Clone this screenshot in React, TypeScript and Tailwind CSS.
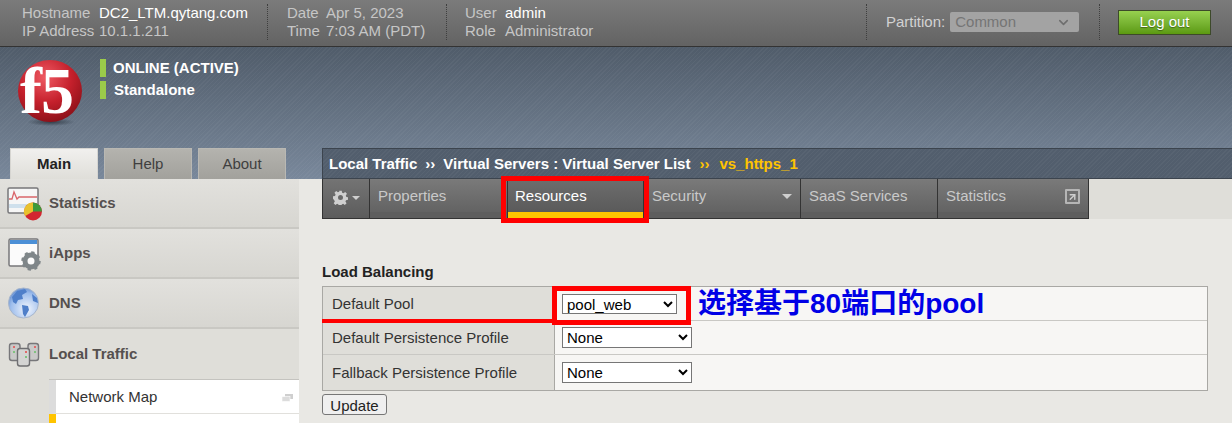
import { ArrowUpRight, ChevronDown } from "lucide-react";

const stripes =
  "bg-[repeating-linear-gradient(135deg,rgba(255,255,255,0.035)_0px,rgba(255,255,255,0.035)_1px,transparent_1px,transparent_3px),linear-gradient(180deg,#505c6a_0%,#79889b_100%)]";

function Separator() {
  return <div className="h-[36px] w-px self-center border-l border-dotted border-[#3f3f3f]" />;
}

function F5Logo() {
  return (
    <svg width="68" height="68" viewBox="0 0 68 68" className="shrink-0 overflow-visible">
      <defs>
        <radialGradient id="ball" cx="42%" cy="28%" r="75%">
          <stop offset="0%" stopColor="#ef5a63" />
          <stop offset="55%" stopColor="#c5202c" />
          <stop offset="100%" stopColor="#8a1018" />
        </radialGradient>
        <radialGradient id="shade" cx="50%" cy="50%" r="50%">
          <stop offset="0%" stopColor="#1d2630" stopOpacity="0.7" />
          <stop offset="100%" stopColor="#1d2630" stopOpacity="0" />
        </radialGradient>
      </defs>
      <ellipse cx="34" cy="63" rx="24" ry="4" fill="url(#shade)" />
      <ellipse cx="33" cy="32" rx="32" ry="31" fill="url(#ball)" />
      <text x="3" y="54" fontFamily="Liberation Serif" fontWeight="700" fontSize="66" fill="#fff" letterSpacing="-1">
        f5
      </text>
    </svg>
  );
}

function StatsIcon() {
  return (
    <svg width="44" height="34" viewBox="0 0 44 34" className="overflow-visible">
      <rect x="2" y="2" width="30" height="25" rx="1.5" fill="#f6f6f6" stroke="#77777a" strokeWidth="1.5" />
      <rect x="3" y="18" width="28" height="4" fill="#cfe0ec" />
      <path d="M3 13h3l2-7 3 7 2-2h18" fill="none" stroke="#d9656a" strokeWidth="1.3" />
      <circle cx="27" cy="25.5" r="9" fill="#d22630" />
      <path d="M27 25.5V16.5A9 9 0 0 1 36 25.5z" fill="#3c9a3a" />
      <path d="M27 25.5V16.5A9 9 0 0 0 19.2 30z" fill="#e8c22e" />
    </svg>
  );
}

function AppsIcon() {
  return (
    <svg width="44" height="34" viewBox="0 0 44 34" className="overflow-visible">
      <rect x="3" y="3" width="29" height="27" rx="1.5" fill="#fbfbfb" stroke="#77777a" strokeWidth="1.5" />
      <rect x="4" y="4" width="27" height="4" fill="#4b8fd6" />
      <circle cx="25" cy="25" r="6" fill="none" stroke="#7f8689" strokeWidth="5" />
      <circle cx="25" cy="25" r="8.5" fill="none" stroke="#7f8689" strokeWidth="2.5" strokeDasharray="3.2 3.47" />
    </svg>
  );
}

function GlobeIcon() {
  return (
    <svg width="44" height="34" viewBox="0 0 44 34">
      <defs>
        <radialGradient id="sea" cx="60%" cy="70%" r="75%">
          <stop offset="0%" stopColor="#f2f6fd" />
          <stop offset="70%" stopColor="#9dbdec" />
          <stop offset="100%" stopColor="#5e88cc" />
        </radialGradient>
      </defs>
      <circle cx="17.5" cy="17" r="15" fill="url(#sea)" stroke="#a7b6cc" />
      <path d="M6 11l5-6 8-2 2 3-5 3 1 4-5 1-2 4-3-2zM16 19l6 1 1 4-4 7-2-3zM26 8l5 4 1 5-5-2z" fill="#4f7fc9" />
    </svg>
  );
}

function ServersIcon() {
  return (
    <svg width="44" height="34" viewBox="0 0 44 34">
      <rect x="3.5" y="6.5" width="10.5" height="17" rx="2.5" fill="#c9c9c8" stroke="#77777a" strokeWidth="1.4" />
      <rect x="22" y="6.5" width="10.5" height="17" rx="2.5" fill="#c9c9c8" stroke="#77777a" strokeWidth="1.4" />
      <rect x="11.5" y="11.5" width="12" height="17.5" rx="2.5" fill="#d4d4d3" stroke="#6f6f72" strokeWidth="1.4" />
      <rect x="7" y="9" width="2" height="2" fill="#e06a6a" />
      <rect x="28" y="9" width="2" height="2" fill="#e06a6a" />
      <rect x="19" y="14" width="2" height="2" fill="#e06a6a" />
      <rect x="19" y="19" width="2" height="2" fill="#7fc27f" />
      <rect x="7" y="14" width="2" height="2" fill="#7fc27f" />
      <rect x="28" y="14" width="2" height="2" fill="#7fc27f" />
    </svg>
  );
}

function SideRow({ icon, label, last }: { icon: React.ReactNode; label: string; last?: boolean }) {
  return (
    <div
      className={
        last
          ? "flex h-[50px] items-center pl-[6px] text-[15px] font-bold text-[#55504f]"
          : "flex h-[50px] items-center border-b-2 border-[#c9c8c3] bg-gradient-to-b from-[#e2e1dd] to-[#d7d6d1] pl-[6px] text-[15px] font-bold text-[#55504f]"
      }
    >
      <span className="w-[43px] shrink-0">{icon}</span>
      {label}
    </div>
  );
}

function TopTab({ label, active }: { label: string; active?: boolean }) {
  return (
    <div
      className={
        active
          ? "flex h-[31px] w-[88px] items-center justify-center border border-b-0 border-[#d6d5d1] bg-gradient-to-b from-[#f1f0ee] to-[#dfded9] text-[15px] font-bold text-[#222]"
          : "flex h-[31px] w-[88px] items-center justify-center border border-b-0 border-[#b9b8b3] bg-gradient-to-b from-[#b4b3ae] to-[#a2a19c] text-[15px] text-[#3f3f3f]"
      }
    >
      {label}
    </div>
  );
}

function NavTab({ label, width, children }: { label: string; width: string; children?: React.ReactNode }) {
  return (
    <div className={`${width} flex h-full flex-col border-l border-[#333]`}>
      <div className="flex flex-1 items-center justify-between bg-gradient-to-b from-[#7a7a7a] to-[#636363] px-[8px] pt-[2px] text-[15px] text-[#c9c9c9]">
        {label}
        {children}
      </div>
      <div className="h-[6px] bg-[#5e5e5e]" />
    </div>
  );
}

function FormRow({ label, children, last }: { label: string; children: React.ReactNode; last?: boolean }) {
  return (
    <div className={last ? "relative flex h-[35px]" : "relative flex h-[34px] border-b border-[#c9c8c4]"}>
      <div className="flex w-[232px] shrink-0 items-center border-r border-[#a9a8a4] bg-[#dfded9] pl-[9px] pt-[2px] text-[15px] text-[#333]">
        {label}
      </div>
      <div className="flex flex-1 items-center bg-[#f7f6f4] pl-[7px]">{children}</div>
    </div>
  );
}

export default function App() {
  return (
    <div className="h-[423px] w-[1232px] overflow-hidden bg-[#e9e8e4] font-['Liberation_Sans',Arial,sans-serif] text-[15px]">
      <header className="flex h-[47px] items-center border-b border-[#333] bg-gradient-to-b from-[#7b7b7b] to-[#636363] pb-[2px] leading-[18px]">
        <div className="grid w-[267px] grid-cols-[77px_1fr] pl-[22px] text-[#c6c6c6]">
          <span>Hostname</span>
          <span className="text-white">DC2_LTM.qytang.com</span>
          <span>IP Address</span>
          <span>10.1.1.211</span>
        </div>
        <Separator />
        <div className="grid w-[178px] grid-cols-[39px_1fr] pl-[19px] text-[#c6c6c6]">
          <span>Date</span>
          <span>Apr 5, 2023</span>
          <span>Time</span>
          <span>7:03 AM (PDT)</span>
        </div>
        <Separator />
        <div className="grid w-[419px] grid-cols-[40px_1fr] pl-[18px] text-[#c6c6c6]">
          <span>User</span>
          <span className="text-white">admin</span>
          <span>Role</span>
          <span>Administrator</span>
        </div>
        <Separator />
        <div className="flex w-[232px] items-center gap-[5px] pl-[19px]">
          <span className="text-[#d2d2d2]">Partition:</span>
          <div className="flex h-[20px] w-[129px] items-center justify-between rounded-[2px] bg-[#a3a3a3] pl-[5px] pr-[8px] text-[#757575]">
            Common
            <ChevronDown size={15} strokeWidth={2.5} className="text-[#6e6e6e]" />
          </div>
        </div>
        <Separator />
        <button className="ml-[18px] h-[25px] w-[93px] border border-[#3d4a2a] bg-gradient-to-b from-[#97d14f] to-[#5c9a10] text-[15px] text-white [text-shadow:0_1px_1px_rgba(0,0,0,0.4)]">
          Log out
        </button>
      </header>

      <div className={`flex h-[132px] flex-col justify-between ${stripes}`}>
        <div className="flex pl-[17px] pt-[12px]">
          <F5Logo />
          <div className="ml-[15px] flex flex-col gap-[4px] text-[15px] font-bold text-white">
            <div className="flex h-[18px] items-center gap-[7px]">
              <span className="h-full w-[6px] bg-[#9bcb4a]" />
              ONLINE (ACTIVE)
            </div>
            <div className="flex h-[18px] items-center gap-[8px]">
              <span className="h-full w-[6px] bg-[#9bcb4a]" />
              Standalone
            </div>
          </div>
        </div>
        <div className="flex items-end">
          <div className="flex w-[322px] gap-[6px] pl-[10px]">
            <TopTab label="Main" active />
            <TopTab label="Help" />
            <TopTab label="About" />
          </div>
          <div className="flex h-[31px] flex-1 items-center gap-[8px] border border-r-0 border-[#3c444e] bg-[#525e6d] bg-[repeating-linear-gradient(135deg,rgba(255,255,255,0.035)_0px,rgba(255,255,255,0.035)_1px,transparent_1px,transparent_3px)] pl-[6px] pt-[2px] font-bold text-white">
            <span>Local Traffic</span>
            <span>››</span>
            <span>Virtual Servers : Virtual Server List</span>
            <span className="ml-px text-[#ffc400]">››</span>
            <span className="ml-[2px] text-[#ffc400]">vs_https_1</span>
          </div>
        </div>
      </div>

      <div className="flex">
        <aside className="h-[244px] w-[299px] shrink-0 bg-[#dfded9]">
          <SideRow icon={<StatsIcon />} label="Statistics" />
          <SideRow icon={<AppsIcon />} label="iApps" />
          <SideRow icon={<GlobeIcon />} label="DNS" />
          <SideRow icon={<ServersIcon />} label="Local Traffic" last />
          <div className="ml-[49px] border-t border-[#c4c3bf] bg-white">
            <div className="flex h-[34px] items-center justify-between border-b border-l-[7px] border-[#e1e0dc] border-l-[#dcdcdc] pl-[13px] pr-[6px] pt-[2px] text-[#333]">
              Network Map
              <svg width="11" height="8" viewBox="0 0 11 8">
                <rect x="3" y="0" width="8" height="5" fill="#cfcfcf" />
                <rect x="0" y="2.5" width="8" height="5" fill="#dcdcdc" stroke="#fff" strokeWidth="0.6" />
              </svg>
            </div>
            <div className="h-[12px] border-l-[7px] border-l-[#ffc400]" />
          </div>
        </aside>

        <main className="flex-1">
          <div className="ml-[23px] flex h-[40px] bg-[#dfded9]">
            <div className="flex h-full w-[767px] border-b border-r border-[#333]">
              <div className="flex h-full w-[47px] items-center justify-center gap-[4px] border-l border-[#333] bg-gradient-to-b from-[#747474] to-[#5c5c5c] pb-[3px]">
                <svg width="15" height="15" viewBox="0 0 24 24" fill="#cfcfcf">
                  <path d="M10 1h4l.6 3.2 2.2.9 2.7-1.8 2.8 2.8-1.8 2.7.9 2.2 2.6.6v4l-3.2.6-.9 2.2 1.8 2.7-2.8 2.8-2.7-1.8-2.2.9-.6 3.2h-4l-.6-3.2-2.2-.9-2.7 1.8-2.8-2.8 1.8-2.7-.9-2.2L0 14v-4l3.2-.6.9-2.2L2.3 4.5l2.8-2.8 2.7 1.8 2.2-.9zM12 8a4 4 0 1 0 0 8 4 4 0 0 0 0-8z" />
                </svg>
                <span className="mt-[2px] h-0 w-0 border-x-[4px] border-t-[4px] border-x-transparent border-t-[#cfcfcf]" />
              </div>
              <NavTab label="Properties" width="w-[138px]" />
              <div className="relative flex h-full w-[136px] flex-col border-l border-[#333]">
                <div className="flex flex-1 items-center bg-gradient-to-b from-[#6e6e6e] to-[#5a5a5a] px-[7px] pt-[2px] text-white">
                  Resources
                </div>
                <div className="h-[6px] bg-[#ffc400]" />
                <div className="absolute -bottom-[5px] -left-[7px] -right-[6px] -top-[3px] z-10 border-[5px] border-[#ff0000]" />
              </div>
              <NavTab label="Security" width="w-[157px]">
                <span className="h-0 w-0 border-x-[5px] border-t-[5px] border-x-transparent border-t-[#cfcfcf]" />
              </NavTab>
              <NavTab label="SaaS Services" width="w-[137px]" />
              <NavTab label="Statistics" width="w-[151px]">
                <span className="flex h-[15px] w-[15px] items-center justify-center rounded-[1px] border-2 border-[#b5b5b5] bg-[#707070]">
                  <ArrowUpRight size={12} strokeWidth={3} className="text-[#cfcfcf]" />
                </span>
              </NavTab>
            </div>
          </div>

          <div className="ml-[23px] mr-[24px] mt-[45px]">
            <h2 className="h-[22px] font-bold leading-[16px] text-[#222]">Load Balancing</h2>
            <div className="border border-[#a9a8a4]">
              <FormRow label="Default Pool">
                <div className="relative mr-[21px]">
                  <select defaultValue="pool_web" className="block h-[20px] w-[115px] border border-[#767676] bg-white text-[15px] text-black">
                    <option>pool_web</option>
                  </select>
                  <div className="absolute -bottom-[11px] -left-[10px] -right-[14px] -top-[8px] z-10 border-[5px] border-[#ff0000]" />
                </div>
                <span className="font-['Liberation_Sans','Noto_Sans_CJK_SC',sans-serif] text-[28px] font-bold text-[#0000e6]">
                  选择基于80端口的pool
                </span>
                <div className="absolute -bottom-[3px] -left-px z-10 h-[4px] w-[231px] bg-[#ff0000]" />
              </FormRow>
              <FormRow label="Default Persistence Profile">
                <select defaultValue="None" className="block h-[21px] w-[130px] border border-[#767676] bg-white text-[15px] text-black">
                  <option>None</option>
                </select>
              </FormRow>
              <FormRow label="Fallback Persistence Profile" last>
                <select defaultValue="None" className="block h-[21px] w-[130px] border border-[#767676] bg-white text-[15px] text-black">
                  <option>None</option>
                </select>
              </FormRow>
            </div>
            <button className="mt-[3px] h-[21px] w-[65px] rounded-[3px] border border-[#767676] bg-[#efefef] text-[15px] text-[#222]">
              Update
            </button>
          </div>
        </main>
      </div>
    </div>
  );
}
